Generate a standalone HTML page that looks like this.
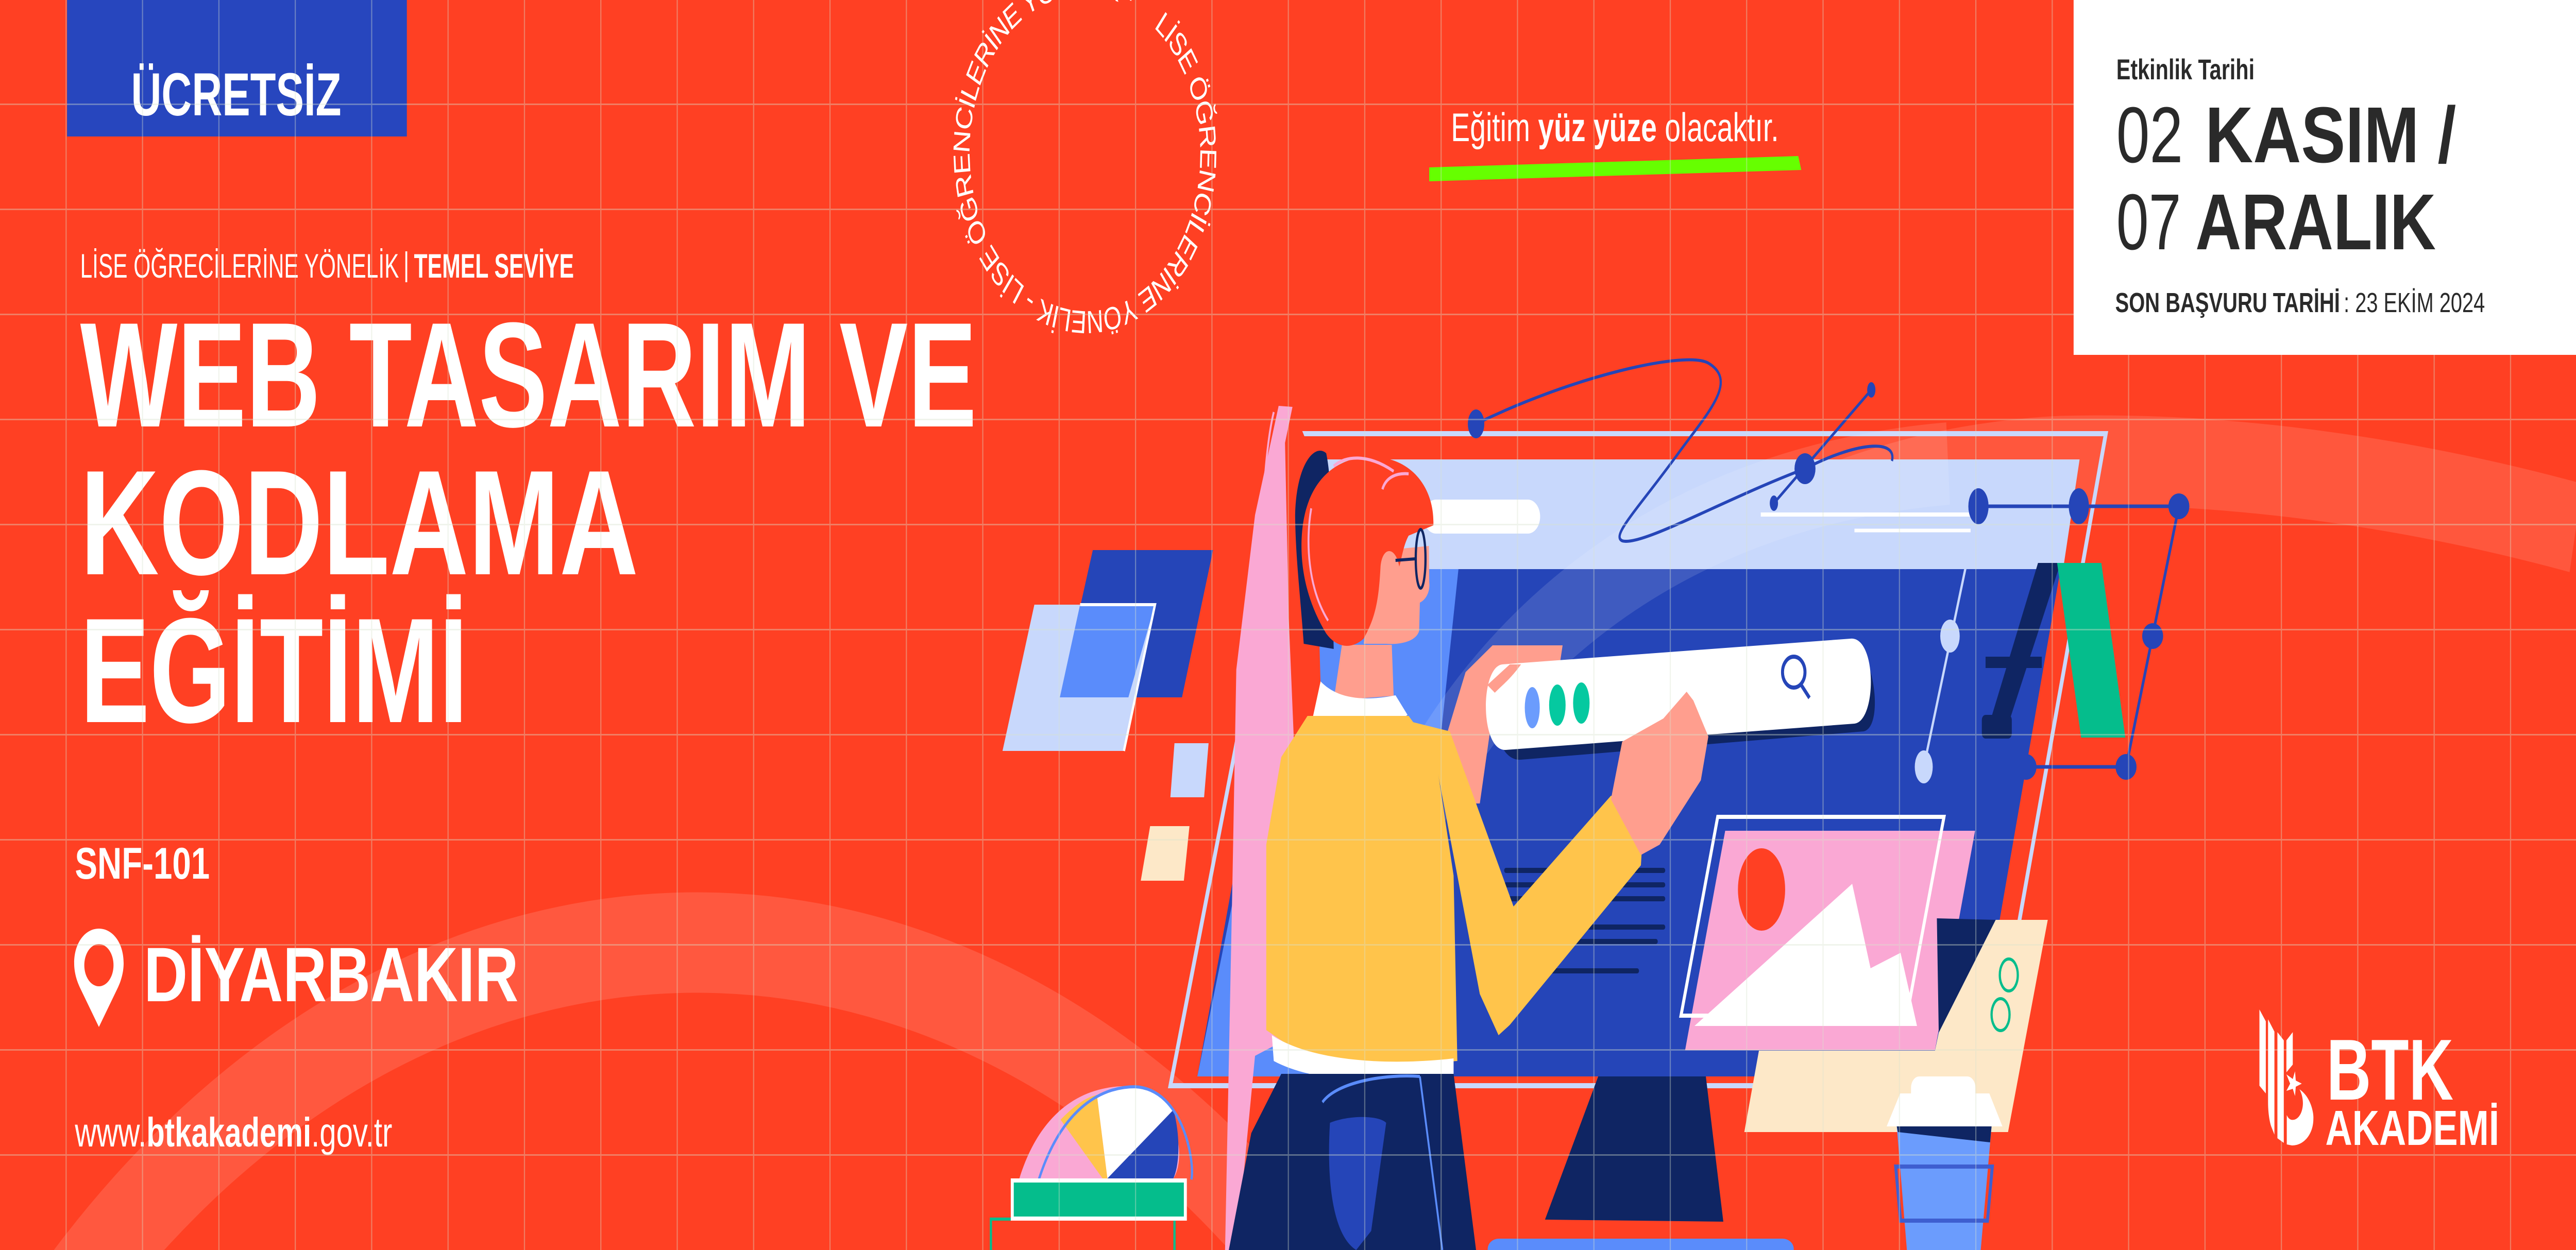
<!DOCTYPE html>
<html><head><meta charset="utf-8">
<style>
html,body{margin:0;padding:0;background:#FF4023;width:100%;height:100%;overflow:hidden;}
svg{display:block;width:100vw;height:100vh;}
text{font-family:"Liberation Sans",sans-serif;}
</style></head>
<body>
<svg viewBox="0 0 6876 2427" preserveAspectRatio="none" xmlns="http://www.w3.org/2000/svg">
<defs>
<pattern id="grid" x="175" y="-3" width="203.9" height="204" patternUnits="userSpaceOnUse">
<path d="M1.5 0V204M0 1.5H204" stroke="rgba(215,225,205,0.38)" stroke-width="3" fill="none"/>
</pattern>
<path id="ring" d="M3079.5,53.4 A305,305 0 1 1 2712.5,540.6 A305,305 0 1 1 3079.5,53.4"/>
</defs>
<rect width="6876" height="2427" fill="#FF4023"/>

<circle cx="1860" cy="4200" r="2370" fill="none" stroke="rgba(255,255,255,0.13)" stroke-width="195"/>
<path d="M3560,2427 C3700,1500 4500,930 5500,895 C6000,885 6500,950 6876,1025" fill="none" stroke="rgba(255,255,255,0.12)" stroke-width="175"/>

<polygon points="2917,1068 3238,1068 3155,1354 2829,1354" fill="#2545B8"/>
<polygon points="2761,1174 3083,1174 3000,1458 2676,1458" fill="#C8D8FC"/>
<polygon points="2883,1174 3083,1174 3012,1354 2829,1354" fill="#5A8CFB"/>
<polyline points="2883,1174 3083,1174 3000,1458" fill="none" stroke="#fff" stroke-width="6"/>
<polygon points="3135,1443 3226,1443 3214,1548 3124,1548" fill="#C8D8FC"/>
<polygon points="3070,1604 3175,1604 3160,1710 3045,1710" fill="#FDE8C8"/>

<polygon points="3460,842 5621,842 5312,2108 3124,2108" fill="none" stroke="#C8D8FC" stroke-width="10"/>
<polygon points="4267,2088 4553,2088 4600,2372 4124,2368" fill="#0F2563"/>
<rect x="3971" y="2405" width="817" height="40" rx="30" fill="#5A8CFB"/>
<polygon points="3495,892 5551,892 5265,2090 3196,2090" fill="#2545B8"/>
<polygon points="3495,892 5551,892 5507,1105 3470,1105" fill="#C8D8FC"/>
<polygon points="3470,1105 3893,1105 3750,2090 3196,2090" fill="#5A8CFB"/>
<rect x="3800" y="970" width="311" height="66" rx="33" fill="#fff"/>
<line x1="4700" y1="999" x2="5260" y2="999" stroke="#fff" stroke-width="8"/>
<line x1="4950" y1="1030" x2="5260" y2="1030" stroke="#fff" stroke-width="7"/>
<g stroke="#0F2563" stroke-width="10" stroke-linecap="round">
<line x1="4020" y1="1690" x2="4440" y2="1690"/><line x1="4020" y1="1718" x2="4440" y2="1718"/><line x1="4020" y1="1745" x2="4440" y2="1745"/>
<line x1="4020" y1="1800" x2="4440" y2="1800"/><line x1="4020" y1="1828" x2="4420" y2="1828"/><line x1="4020" y1="1885" x2="4370" y2="1885"/>
</g>
<path d="M3700,1700 C3900,1300 4400,950 5200,900" fill="none" stroke="rgba(255,255,255,0.12)" stroke-width="160"/>

<path d="M3940,823 C4200,730 4500,680 4560,705 C4640,740 4560,800 4480,880 C4370,990 4300,1040 4330,1050 C4380,1062 4600,970 4818,910 C4950,860 5065,850 5050,895" fill="none" stroke="#2545B8" stroke-width="6"/>
<line x1="4735" y1="977" x2="4995" y2="757" stroke="#2545B8" stroke-width="6"/>
<ellipse cx="3940" cy="823" rx="22" ry="28" fill="#2545B8"/>
<ellipse cx="4818" cy="910" rx="28" ry="30" fill="#2545B8"/>
<ellipse cx="4735" cy="977" rx="11" ry="15" fill="#2545B8"/>
<ellipse cx="4995" cy="757" rx="11" ry="15" fill="#2545B8"/>

<polygon points="5440,1093 5500,1093 5350,1430 5300,1430" fill="#0F2563"/>
<rect x="5300" y="1275" width="150" height="22" fill="#0F2563"/>
<rect x="5290" y="1388" width="80" height="46" rx="10" fill="#0F2563"/>
<polygon points="5491,1093 5609,1093 5673,1432 5555,1432" fill="#05BD8C"/>
<g stroke="#2545B8" stroke-width="7" fill="none">
<line x1="5281" y1="983" x2="5816" y2="983"/><line x1="5816" y1="983" x2="5675" y2="1489"/>
<line x1="5135" y1="1489" x2="5675" y2="1489"/>
</g>
<line x1="5281" y1="983" x2="5135" y2="1489" stroke="#C8D8FC" stroke-width="6"/>
<g fill="#2545B8"><ellipse cx="5281" cy="983" rx="27" ry="35"/><ellipse cx="5549" cy="983" rx="27" ry="35"/><ellipse cx="5816" cy="983" rx="28" ry="25"/><ellipse cx="5746" cy="1235" rx="28" ry="25"/><ellipse cx="5675" cy="1489" rx="28" ry="25"/><ellipse cx="5408" cy="1489" rx="28" ry="25"/></g>
<g fill="#C8D8FC"><ellipse cx="5205" cy="1235" rx="26" ry="32"/><ellipse cx="5135" cy="1489" rx="24" ry="32"/></g>

<polygon points="4605,1613 5272,1613 5165,2039 4498,2039" fill="#FAA8D4"/>
<ellipse cx="4702" cy="1727" rx="63" ry="80" fill="#FF4023"/>
<polygon points="4523,1992 4944,1716 4993,1880 5073,1850 5117,1992" fill="#fff"/>
<polygon points="4585,1586 5189,1586 5090,1972 4487,1972" fill="none" stroke="#fff" stroke-width="8"/>
<polygon points="5170,1783 5327,1786 5175,2005" fill="#0F2563"/>
<polygon points="5327,1786 5466,1786 5360,2198 4656,2198 4695,2040 5165,2040 5175,2005" fill="#FDE8C8"/>
<ellipse cx="5362" cy="1893" rx="24" ry="31" fill="none" stroke="#05BD8C" stroke-width="6"/>
<ellipse cx="5340" cy="1970" rx="24" ry="31" fill="none" stroke="#05BD8C" stroke-width="6"/>
<polygon points="5063,2187 5316,2187 5287,2427 5090,2427" fill="#6B9CFD"/>
<polygon points="5063,2187 5316,2187 5312,2218 5066,2198" fill="#0F2563"/>
<polygon points="5060,2265 5318,2265 5305,2370 5073,2370" fill="none" stroke="#3E5ED0" stroke-width="8"/>
<rect x="5101" y="2090" width="172" height="60" rx="22" fill="#fff"/>
<polygon points="5072,2123 5310,2123 5345,2187 5036,2187" fill="#fff"/>

<path d="M2721,2288 C2780,2150 2900,2105 3024,2109 C3100,2110 3140,2180 3147,2230 C3150,2260 3140,2280 3132,2288 Z" fill="#FAA8D4"/>
<path d="M2831,2174 C2870,2145 2900,2130 2928,2126 L2956,2288 L2943,2288 Z" fill="#FFC44B"/>
<path d="M2928,2126 C2970,2110 3000,2108 3024,2109 C3080,2112 3115,2140 3132,2155 L2956,2288 Z" fill="#fff"/>
<path d="M3132,2155 C3150,2200 3150,2260 3132,2288 L2956,2288 Z" fill="#2545B8"/>
<path d="M2773,2290 C2830,2160 2930,2110 3030,2110 C3160,2115 3190,2260 3180,2290" fill="none" stroke="#5A8CFB" stroke-width="6"/>
<polyline points="2645,2427 2645,2367 3135,2367 3135,2427" fill="none" stroke="#05BD8C" stroke-width="6"/>
<rect x="2702" y="2292" width="462" height="74" fill="#05BD8C" stroke="#fff" stroke-width="8"/>

<polygon points="3413,788 3450,790 3440,860 3460,1200 3495,1700 3480,2000 3350,2050 3300,2427 3270,2427 3290,1700 3300,1300 3350,1000" fill="#FAA8D4"/>
<polygon points="3450,790 3500,880 3520,1200 3540,1720 3470,1720 3440,1200 3430,860" fill="#FF4023"/>
<path d="M3400,800 C3350,950 3360,1400 3380,1780" fill="none" stroke="#FAA8D4" stroke-width="5"/>
<path d="M3457,1000 C3460,900 3510,860 3540,880 C3560,950 3555,1100 3560,1260 L3480,1250 C3470,1150 3458,1080 3457,1000Z" fill="#0F2563"/>
<polygon points="3582,1252 3715,1252 3720,1351 3560,1360" fill="#FF9E8E"/>
<path d="M3673,1070 L3814,1060 L3815,1130 C3818,1150 3805,1165 3790,1170 L3788,1225 C3780,1245 3740,1252 3700,1250 L3640,1250 Z" fill="#FF9E8E"/>
<path d="M3474,1060 C3474,940 3560,887 3660,887 C3770,887 3830,950 3826,1020 L3760,1040 C3745,1060 3740,1090 3735,1100 C3725,1060 3690,1060 3685,1100 C3680,1170 3670,1200 3640,1240 C3610,1260 3570,1260 3540,1230 C3490,1170 3474,1110 3474,1060Z" fill="#FF4023"/>
<path d="M3560,905 C3590,885 3650,880 3720,915" fill="none" stroke="#FAA8D4" stroke-width="6"/>
<path d="M3690,950 C3700,925 3730,918 3760,920" fill="none" stroke="#FAA8D4" stroke-width="6"/>
<path d="M3500,987 C3485,1050 3490,1140 3545,1205" fill="none" stroke="#FAA8D4" stroke-width="5"/>
<ellipse cx="3792" cy="1085" rx="13" ry="57" fill="none" stroke="#0F2563" stroke-width="6"/>
<line x1="3725" y1="1088" x2="3778" y2="1085" stroke="#0F2563" stroke-width="6"/>
<path d="M3525,1323 C3560,1350 3620,1365 3725,1350 L3757,1388 C3700,1420 3580,1430 3505,1390 Z" fill="#fff"/>
<polygon points="3490,1390 3760,1390 3830,1460 3880,1700 3890,2060 3700,2070 3500,2060 3380,2000 3380,1640 3420,1470" fill="#FFC44B"/>
<polygon points="3860,1430 3912,1305 3984,1253 4171,1253 4165,1282 4120,1295 4040,1300 3985,1380 3950,1560 3900,1560" fill="#FF9E8E"/>
<path d="M4000,1320 L4950,1262 C5000,1260 5030,1410 4975,1420 L4060,1475 C4000,1478 3975,1400 4000,1320Z" fill="#0F2563"/>
<path d="M4010,1290 L4940,1240 C5010,1236 5010,1400 4950,1405 L4020,1456 C3950,1460 3950,1295 4010,1290Z" fill="#fff"/>
<ellipse cx="4090" cy="1374" rx="20" ry="40" fill="#6B9CFD"/>
<ellipse cx="4157" cy="1369" rx="22" ry="40" fill="#05C9A0"/>
<ellipse cx="4221" cy="1365" rx="22" ry="40" fill="#05C9A0"/>
<circle cx="4788" cy="1305" r="30" fill="none" stroke="#2545B8" stroke-width="8"/>
<line x1="4808" y1="1330" x2="4830" y2="1355" stroke="#2545B8" stroke-width="8"/>
<path d="M3970,1330 L4030,1290 L4060,1290 C4030,1320 4010,1330 3990,1345Z" fill="#FF9E8E"/>
<polygon points="3760,1400 3830,1470 3950,1930 4000,2010 4030,1990 4380,1680 4390,1560 4300,1545 4040,1760 3870,1420" fill="#FFC44B"/>
<polygon points="4300,1552 4330,1440 4440,1395 4502,1343 4520,1360 4560,1430 4540,1515 4430,1640 4380,1660" fill="#FF9E8E"/>
<path d="M3395,2010 C3500,2060 3700,2070 3880,2055 L3880,2090 C3700,2110 3500,2100 3400,2060Z" fill="#fff"/>
<polygon points="3420,2085 3880,2085 3940,2427 3280,2427 3340,2200" fill="#0F2563"/>
<path d="M3530,2140 C3570,2100 3700,2085 3790,2090" fill="none" stroke="#5A8CFB" stroke-width="6"/>
<path d="M3550,2180 C3600,2165 3680,2165 3700,2180 L3660,2390 L3620,2427 C3560,2400 3540,2300 3550,2180Z" fill="#2545B8"/>
<line x1="3790" y1="2090" x2="3850" y2="2427" stroke="#5A8CFB" stroke-width="5"/>

<text font-size="62" fill="#fff" letter-spacing="4"><textPath href="#ring" textLength="1860" lengthAdjust="spacing">LİSE ÖĞRENCİLERİNE YÖNELİK - LİSE ÖĞRENCİLERİNE YÖNELİK -</textPath></text>

<path d="M3815,325 L4800,303 L4808,330 L3815,352 Z" fill="#66FF00"/>
<text x="3873" y="274" font-size="78" fill="#fff" textLength="875" lengthAdjust="spacingAndGlyphs">Eğitim <tspan font-weight="bold">yüz yüze</tspan> olacaktır.</text>

<rect x="179" y="0" width="907" height="265" fill="#2746BE"/>
<text x="350" y="224" font-size="118" font-weight="bold" fill="#fff" textLength="561" lengthAdjust="spacingAndGlyphs">ÜCRETSİZ</text>

<text x="214" y="539" font-size="66" fill="#fff" textLength="851" lengthAdjust="spacingAndGlyphs">LİSE ÖĞRECİLERİNE YÖNELİK</text>
<rect x="1082" y="488" width="5" height="60" fill="#fff"/>
<text x="1105" y="539" font-size="66" font-weight="bold" fill="#fff" textLength="427" lengthAdjust="spacingAndGlyphs">TEMEL SEVİYE</text>

<g font-weight="bold" fill="#fff" font-size="290">
<text x="214" y="828" textLength="2393" lengthAdjust="spacingAndGlyphs">WEB TASARIM VE</text>
<text x="214" y="1115" textLength="1490" lengthAdjust="spacingAndGlyphs">KODLAMA</text>
<text x="214" y="1402" textLength="1035" lengthAdjust="spacingAndGlyphs">EĞİTİMİ</text>
</g>

<text x="200" y="1706" font-size="86" font-weight="bold" fill="#fff" textLength="360" lengthAdjust="spacingAndGlyphs">SNF-101</text>
<path d="M264,1994 L215,1920 C200,1898 198,1880 198,1870 C198,1830 228,1803 264,1803 C300,1803 330,1830 330,1870 C330,1880 328,1898 313,1920 Z" fill="#fff"/>
<ellipse cx="264" cy="1874" rx="39" ry="41" fill="#FF4023"/>
<text x="384" y="1944" font-size="150" font-weight="bold" fill="#fff" textLength="1000" lengthAdjust="spacingAndGlyphs">DİYARBAKIR</text>

<text x="200" y="2226" font-size="80" fill="#fff" textLength="847" lengthAdjust="spacingAndGlyphs">www.<tspan font-weight="bold">btkakademi</tspan>.gov.tr</text>

<rect width="6876" height="2427" fill="url(#grid)"/>

<rect x="5535" y="0" width="1341" height="689" fill="#fff"/>
<g fill="#2A2A2A">
<text x="5649" y="154" font-size="56" font-weight="bold" textLength="369" lengthAdjust="spacingAndGlyphs">Etkinlik Tarihi</text>
<text x="5649" y="315" font-size="154" textLength="178" lengthAdjust="spacingAndGlyphs">02</text>
<text x="5886" y="315" font-size="154" font-weight="bold" textLength="670" lengthAdjust="spacingAndGlyphs">KASIM /</text>
<text x="5649" y="484" font-size="154" textLength="173" lengthAdjust="spacingAndGlyphs">07</text>
<text x="5860" y="484" font-size="154" font-weight="bold" textLength="642" lengthAdjust="spacingAndGlyphs">ARALIK</text>
<text x="5646" y="606" font-size="54" font-weight="bold" textLength="600" lengthAdjust="spacingAndGlyphs">SON BAŞVURU TARİHİ</text>
<text x="6256" y="606" font-size="54" textLength="377" lengthAdjust="spacingAndGlyphs">: 23 EKİM 2024</text>
</g>

<g fill="#fff">
<polygon points="6031,1960 6048,1983 6048,2123 6031,2108"/>
<path d="M6054,1979 L6071,2003 L6071,2203 L6064,2190 C6058,2180 6054,2160 6054,2140Z"/>
<polygon points="6079,2004 6096,2020 6096,2219 6079,2210"/>
<polygon points="6103,2020 6120,2004 6120,2067 6103,2082"/>
<polygon points="6120,2095 6126,2080 6128,2098 6144,2104 6128,2110 6126,2128 6120,2114 6103,2118 6113,2104 6103,2086"/>
<path d="M6138,2115 C6168,2130 6176,2160 6175,2172 C6175,2202 6150,2224 6118,2224 L6104,2222 L6104,2165 C6110,2175 6118,2175 6124,2174 C6145,2170 6156,2140 6138,2115Z"/>
<text x="6210" y="2135" font-size="168" font-weight="bold" textLength="339" lengthAdjust="spacingAndGlyphs">BTK</text>
<text x="6207" y="2223" font-size="96" font-weight="bold" textLength="464" lengthAdjust="spacingAndGlyphs">AKADEMİ</text>
</g>
</svg>
</body></html>
